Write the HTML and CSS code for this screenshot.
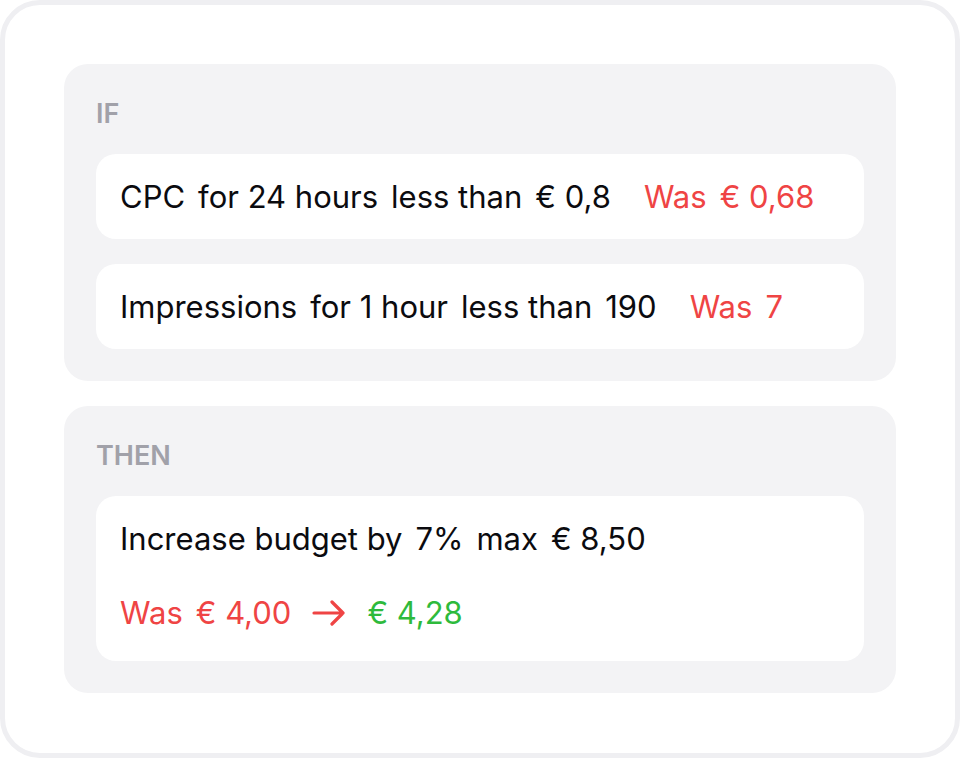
FILE: index.html
```html
<!DOCTYPE html>
<html>
<head>
<meta charset="utf-8">
<link rel="stylesheet" href="styles.css">
</head>
<body>
<div class="card">
  <section class="panel">
    <div class="label">IF</div>
    <div class="row">
      <span class="tok">CPC</span>
      <span class="tok">for 24 hours</span>
      <span class="tok">less than</span>
      <span class="tok">€ 0,8</span>
      <span class="was"><span class="tok red">Was</span><span class="tok red">€ 0,68</span></span>
    </div>
    <div class="row">
      <span class="tok">Impressions</span>
      <span class="tok">for 1 hour</span>
      <span class="tok">less than</span>
      <span class="tok">190</span>
      <span class="was"><span class="tok red">Was</span><span class="tok red">7</span></span>
    </div>
  </section>
  <section class="panel">
    <div class="label">THEN</div>
    <div class="row tall">
      <div class="line">
        <span class="tok">Increase budget by</span>
        <span class="tok">7%</span>
        <span class="tok">max</span>
        <span class="tok">€ 8,50</span>
      </div>
      <div class="line">
        <span class="tok red">Was</span>
        <span class="tok red">€ 4,00</span>
        <svg class="arrow" width="34" height="26" viewBox="0 0 34 26" aria-hidden="true">
          <path d="M2 13 H31 M20 2 L31 13 L20 24" fill="none" stroke="#ef4444" stroke-width="3.2" stroke-linecap="round" stroke-linejoin="round"/>
        </svg>
        <span class="tok green">€ 4,28</span>
      </div>
    </div>
  </section>
</div>
</body>
</html>
```

FILE: styles.css
```css
html, body {
  margin: 0;
  padding: 0;
  background: #ffffff;
}
body {
  font-family: Inter, "Noto Sans", sans-serif;
  color: #0b0b0f;
}
.card {
  box-sizing: border-box;
  width: 960px;
  height: 758px;
  border: 5px solid #efeff2;
  border-radius: 40px;
  background: #ffffff;
  padding: 59px 59px;
  display: flex;
  flex-direction: column;
  gap: 25px;
}
.panel {
  background: #f3f3f5;
  border-radius: 24px;
  padding: 32px;
  display: flex;
  flex-direction: column;
  gap: 25px;
}
.label {
  font-size: 27px;
  line-height: 32px;
  font-weight: 600;
  color: #a1a1a9;
  margin-top: 2px;
  margin-bottom: -1px;
}
.row {
  background: #ffffff;
  border-radius: 20px;
  height: 85px;
  box-sizing: border-box;
  padding: 0 24px;
  display: flex;
  align-items: center;
  gap: 13px;
  font-size: 31px;
}
.row.tall {
  height: 165px;
  flex-direction: column;
  align-items: flex-start;
  justify-content: flex-start;
  padding-top: 25px;
  gap: 38px;
}
.line {
  display: flex;
  align-items: center;
  gap: 13px;
  line-height: 36px;
}
.was {
  display: flex;
  gap: 13px;
  margin-left: 20px;
}
.red { color: #ef4444; }
.green { color: #2eba3c; }
.arrow {
  margin: 0 8px 0 8px;
}
```
